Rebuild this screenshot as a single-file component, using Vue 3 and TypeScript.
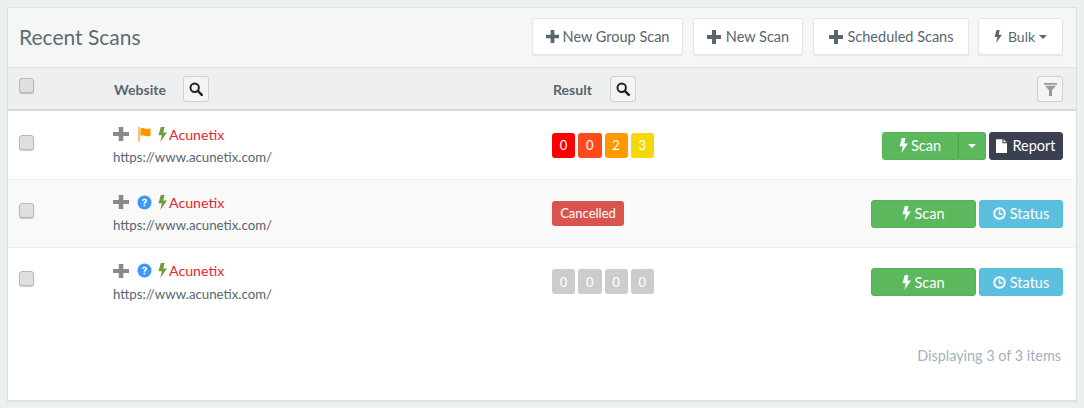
<script setup lang="ts">
interface Badge { value: number; color: string }
interface Row {
  id: number
  marker: 'flag' | 'help'
  badges: Badge[]
  cancelled: boolean
  report: boolean
}
const gray = '#cccccc'
const rows: Row[] = [
  { id: 1, marker: 'flag', cancelled: false, report: true, badges: [
    { value: 0, color: '#ff0000' }, { value: 0, color: '#ff4a1c' }, { value: 2, color: '#ff9900' }, { value: 3, color: '#f6d808' },
  ] },
  { id: 2, marker: 'help', cancelled: true, report: false, badges: [] },
  { id: 3, marker: 'help', cancelled: false, report: false, badges: [
    { value: 0, color: gray }, { value: 0, color: gray }, { value: 0, color: gray }, { value: 0, color: gray },
  ] },
]
const toolbar = [
  { label: 'New Group Scan', cls: 'w-group' },
  { label: 'New Scan', cls: 'w-new' },
  { label: 'Scheduled Scans', cls: 'w-sched' },
]
const plus = 'M5 0h4v5h5v4H9v5H5V9H0V5h5z'
const bolt = 'M6.500 0H2.800L.5 8.200H3.800L2.400 15 9 5.500H5.300z'
</script>

<template>
  <div class="page">
    <section class="card">
      <header class="head">
        <h1 class="title">Recent Scans</h1>
        <div class="tools">
          <button v-for="t in toolbar" :key="t.label" class="tool" :class="t.cls" type="button">
            <svg class="tool-plus" viewBox="0 0 14 14"><path :d="plus" /></svg>{{ t.label }}
          </button>
          <button class="tool bulk" type="button">
            <svg class="tool-bolt" viewBox="0 0 9 15"><path :d="bolt" /></svg>Bulk<span class="caret dark"></span>
          </button>
        </div>
      </header>

      <div class="grid thead">
        <div class="c-check"><span class="check"></span></div>
        <div class="th">
          <span class="th-label">Website</span>
          <span class="icon-btn">
            <svg viewBox="0 0 14 14" width="14" height="14"><circle cx="5.700" cy="5.700" r="4.200" fill="none" stroke="#222" stroke-width="2" /><path d="M8.800 8.800l4 4" stroke="#222" stroke-width="2.400" stroke-linecap="round" /></svg>
          </span>
        </div>
        <div class="th">
          <span class="th-label wider">Result</span>
          <span class="icon-btn">
            <svg viewBox="0 0 14 14" width="14" height="14"><circle cx="5.700" cy="5.700" r="4.200" fill="none" stroke="#222" stroke-width="2" /><path d="M8.800 8.800l4 4" stroke="#222" stroke-width="2.400" stroke-linecap="round" /></svg>
          </span>
        </div>
        <div class="c-act">
          <span class="icon-btn filter">
            <svg viewBox="0 0 12 12" width="13" height="13"><path d="M0 0h12v1.600H0zM1 2.600h10L7.400 6.600V12H4.600V6.600z" fill="#999" /></svg>
          </span>
        </div>
      </div>

      <div v-for="(r, i) in rows" :key="r.id" class="grid row" :class="{ odd: i === 1, last: i === 2 }">
        <div class="c-check"><span class="check"></span></div>
        <div class="site">
          <div class="name">
            <svg class="row-plus" viewBox="0 0 14 14" preserveAspectRatio="none"><path :d="plus" /></svg>
            <svg v-if="r.marker === 'flag'" class="flag" viewBox="0 0 14 16"><path d="M0 0h1.300v16H0zM2.200 1.500c3-1.400 5 1.400 10.800 0v8c-5 1.400-7.800-1.400-10.800 0z" /></svg>
            <svg v-else class="help" viewBox="0 0 16 16"><circle cx="8" cy="8" r="7.500" fill="#3b99fc" /><path d="M5.400 6.200C5.600 4.600 6.700 4 8.100 4c1.600 0 2.700.9 2.700 2.200 0 1.900-2 1.800-2 3.200H7c0-2.200 2-2.200 2-3.200 0-.5-.4-.8-1-.8s-1 .3-1.100.9z M7 10.300h1.900V12H7z" fill="#fff" /></svg>
            <svg class="row-bolt" viewBox="0 0 9 15"><path :d="bolt" /></svg>
            <span class="link">Acunetix</span>
          </div>
          <div class="url">https://www.acunetix.com/</div>
        </div>
        <div>
          <span v-if="r.cancelled" class="cancelled">Cancelled</span>
          <div v-else class="badges">
            <span v-for="(b, n) in r.badges" :key="n" class="badge" :style="{ background: b.color }">{{ b.value }}</span>
          </div>
        </div>
        <div class="c-act actions">
          <template v-if="r.report">
            <span class="split">
              <button class="btn scan short" type="button">
                <svg class="btn-bolt" viewBox="0 0 9 15"><path :d="bolt" /></svg>Scan
              </button>
              <button class="btn scan drop" type="button"><span class="caret"></span></button>
            </span>
            <button class="btn report" type="button">
              <svg class="doc" viewBox="0 0 12 15"><path d="M0 0h7v4.500h5V15H0z" fill="#fff" /><path d="M8 0l4 3.500H8z" fill="#f5d9a0" /></svg>Report
            </button>
          </template>
          <template v-else>
            <button class="btn scan wide" type="button">
              <svg class="btn-bolt" viewBox="0 0 9 15"><path :d="bolt" /></svg>Scan
            </button>
            <button class="btn status" type="button">
              <svg class="clock" viewBox="0 0 14 14"><circle cx="7" cy="7" r="5.700" fill="none" stroke="#fff" stroke-width="2" /><path d="M7 3.500V7.500h3" fill="none" stroke="#fff" stroke-width="1.500" /></svg>Status
            </button>
          </template>
        </div>
      </div>

      <footer class="foot">Displaying 3 of 3 items</footer>
    </section>
  </div>
</template>

<style>
html, body { margin: 0; background: #ecf0f1; }
</style>

<style scoped>
.page {
  width: 1084px;
  height: 408px;
  box-sizing: border-box;
  padding: 7px;
  background: #ecf0f1;
  font-family: Lato, "Open Sans", sans-serif;
  font-size: 14px;
  color: #58666e;
}
.card {
  height: 100%;
  box-sizing: border-box;
  display: flex;
  flex-direction: column;
  background: #fff;
  border: 1px solid #dee0e1;
  box-shadow: 0 1px 1px rgba(0, 0, 0, 0.05);
}
.head {
  height: 60px;
  box-sizing: border-box;
  display: flex;
  align-items: center;
  justify-content: space-between;
  padding: 0 13px 2px 11px;
  background: #f5f7f7;
  border-bottom: 1px solid #dee0e1;
}
.title {
  margin: 0;
  font-size: 21px;
  font-weight: 400;
  color: #5f6b73;
}
.tools { display: flex; gap: 10px; }
.tool {
  height: 37px;
  padding: 0;
  display: inline-flex;
  align-items: center;
  justify-content: center;
  background: #fff;
  border: 1px solid #e3e6e7;
  border-radius: 2px;
  box-shadow: 0 1px 1px rgba(90, 90, 90, 0.1);
  font: inherit;
  font-size: 14.500px;
  color: #58666e;
}
.w-group { width: 151px; }
.w-new { width: 110px; }
.w-sched { width: 156px; margin-right: -1px; }
.bulk { width: 85px; font-size: 14px; }
.tool-plus { width: 13px; height: 13px; margin-right: 4px; fill: #58666e; }
.w-new .tool-plus, .w-sched .tool-plus { width: 14px; height: 14px; margin-right: 5px; }
.tool-bolt { width: 8px; height: 13px; margin-right: 6px; fill: #58666e; }

.grid {
  display: grid;
  grid-template-columns: 105px 439px 200px 1fr;
  align-items: center;
}
.c-check { padding-left: 11px; }
.thead {
  height: 43px;
  margin-bottom: 1px;
  background: #edeff1;
  border-bottom: 2px solid #d6d8d9;
  box-sizing: border-box;
}
.row {
  height: 68px;
  box-sizing: border-box;
  border-bottom: 1px solid #eef0f2;
}
.row.last { border-bottom: 0; }
.odd { background: #f9f9f9; }
.th {
  display: flex;
  align-items: center;
  font-weight: 700;
  font-size: 14.100px;
  color: #58666e;
}
.th-label { margin: 2px 17px 0 1px; }
.th-label.wider { margin-right: 18px; }
.check {
  display: block;
  width: 13px;
  height: 13px;
  margin-top: -7px;
  background: #dfdfdf;
  border: 1px solid #b9b9b9;
  border-radius: 3px;
  box-shadow: 0 1px 1px rgba(0, 0, 0, 0.2);
}
.thead .check { margin-top: -6px; }
.icon-btn {
  display: inline-flex;
  align-items: center;
  justify-content: center;
  box-sizing: border-box;
  width: 26px;
  height: 26px;
  background: #f3f4f5;
  border: 1px solid #cfd1d2;
  border-radius: 3px;
}
.filter { margin-top: 1px; }
.c-act { display: flex; justify-content: flex-end; padding-right: 13px; }

.site { margin-top: -1px; }
.name {
  display: flex;
  align-items: center;
  height: 20px;
  margin-top: -1px;
}
.row-plus { width: 16px; height: 14px; margin-right: 9px; fill: #8a8a8a; }
.flag { width: 14px; height: 15px; margin-right: 6px; fill: #ff9800; }
.help { width: 15px; height: 15px; margin: 0 6px 0 -1px; }
.row-bolt { width: 9px; height: 15px; margin-right: 2px; fill: #6f9e38; }
.link { color: #e6262e; font-size: 14.200px; }
.url { margin-top: 5px; font-size: 13.250px; color: #58666e; }

.badges { display: flex; gap: 3px; margin-top: -1px; }
.badge {
  width: 23.250px;
  height: 25px;
  display: inline-flex;
  align-items: center;
  justify-content: center;
  border-radius: 3px;
  color: #fff;
  font-size: 13px;
}
.cancelled {
  display: inline-flex;
  align-items: center;
  justify-content: center;
  width: 72px;
  height: 25px;
  margin-top: -1px;
  background: #d9534f;
  border-radius: 3px;
  color: #fff;
  font-size: 13px;
}
.actions { gap: 3px; }
.split { display: inline-flex; }
.btn {
  height: 28px;
  box-sizing: border-box;
  padding: 0;
  display: inline-flex;
  align-items: center;
  justify-content: center;
  border: 1px solid transparent;
  border-radius: 3px;
  color: #fff;
  font: inherit;
  font-size: 14.500px;
}
.scan { background: #5cb85c; border-color: #54b254; }
.short { width: 76px; border-radius: 3px 0 0 3px; }
.drop { width: 28px; border-left-color: #4ea64e; border-radius: 0 3px 3px 0; }
.wide { width: 105px; }
.report { width: 74px; background: #3a3f51; border-color: #3a3f51; }
.status { width: 84px; background: #5bc0de; border-color: #55bcdb; }
.btn-bolt { width: 9px; height: 15px; margin-right: 3px; fill: #fff; }
.doc { width: 11px; height: 14px; margin-right: 5px; }
.clock { width: 13px; height: 13px; margin-right: 4px; }
.caret {
  width: 0;
  height: 0;
  border-left: 4px solid transparent;
  border-right: 4px solid transparent;
  border-top: 4px solid #fff;
}
.caret.dark { margin-left: 4px; border-top-color: #58666e; }
.foot {
  margin-top: auto;
  padding: 0 15px 36px 0;
  text-align: right;
  font-size: 14.400px;
  color: #a3b1bf;
}
</style>
